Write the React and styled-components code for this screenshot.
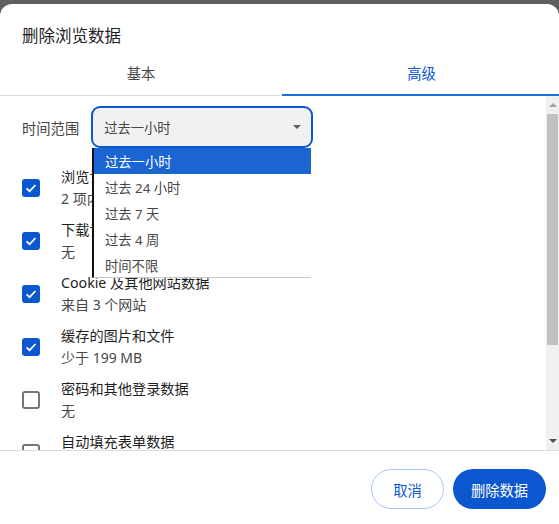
import React from 'react';
import styled, { createGlobalStyle } from 'styled-components';

const GlobalStyle = createGlobalStyle`
  html, body {
    margin: 0;
    padding: 0;
    background: #5f5f5f;
    font-family: 'Noto Sans', 'Noto Sans CJK SC', sans-serif;
  }
`;

const Dialog = styled.div`
  width: 559px;
  height: 520px;
  margin-top: 4px;
  background: #fff;
  border-radius: 12px 12px 0 0;
  display: flex;
  flex-direction: column;
  overflow: hidden;
`;

const Title = styled.h1`
  margin: 0;
  padding: 21px 22px 0;
  height: 30px;
  font-size: 16.5px;
  line-height: 22px;
  font-weight: 400;
  color: #1f1f1f;
`;

const Tabs = styled.div`
  display: grid;
  grid-template-columns: 282px 277px;
  height: 40px;
  border-bottom: 1px solid #dcdcdc;
`;

const Tab = styled.div`
  display: flex;
  align-items: center;
  justify-content: center;
  font-size: 14.3px;
  padding: 0 0 6px ${(props) => (props.$active ? '2px' : '0')};
  margin-bottom: -1px;
  color: ${(props) => (props.$active ? '#0b57d0' : '#474747')};
  box-shadow: ${(props) => (props.$active ? 'inset 0 -2px 0 #1a6fe0' : 'none')};
`;

const Body = styled.div`
  flex: 1;
  min-height: 0;
  display: flex;
  position: relative;
  overflow: hidden;
`;

const Content = styled.div`
  flex: 1;
  padding: 10px 0 0 22px;
`;

const RangeRow = styled.div`
  display: flex;
  align-items: center;
  gap: 12px;
  height: 42px;
  margin-bottom: 13px;
`;

const RangeLabel = styled.span`
  font-size: 14.3px;
  color: #474747;
`;

const Select = styled.div`
  box-sizing: border-box;
  width: 222px;
  height: 42px;
  border: 2px solid #0b57d0;
  border-radius: 9px;
  background: #f1f1f1;
  display: flex;
  align-items: center;
  justify-content: space-between;
  padding: 0 10px 0 11px;
  font-size: 13.3px;
  color: #474747;
`;

const Caret = styled.span`
  width: 0;
  height: 0;
  border-left: 4px solid transparent;
  border-right: 4px solid transparent;
  border-top: 4px solid #5f5f5f;
`;

const Menu = styled.ul`
  position: absolute;
  left: 92px;
  top: 52px;
  width: 217px;
  height: 129px;
  margin: 0;
  padding: 0;
  list-style: none;
  background: #fff;
  border-left: 2px solid #111;
  border-bottom: 1px solid #c8c8c8;
  overflow: hidden;
  z-index: 2;
`;

const MenuItem = styled.li`
  box-sizing: border-box;
  height: 26px;
  line-height: 26px;
  padding: 1px 0 0 11px;
  font-size: 13.3px;
  background: ${(props) => (props.$selected ? '#1a65d1' : 'transparent')};
  color: ${(props) => (props.$selected ? '#fff' : '#474747')};
`;

const Row = styled.div`
  display: flex;
  align-items: center;
  gap: 21px;
  height: 53px;
`;

const Box = styled.span`
  box-sizing: border-box;
  flex: none;
  width: 18px;
  height: 18px;
  border-radius: 3px;
  display: flex;
  align-items: center;
  justify-content: center;
  background: ${(props) => (props.$checked ? '#0b57d0' : '#fff')};
  border: ${(props) => (props.$checked ? 'none' : '2px solid #757575')};
`;

const RowText = styled.div`
  display: flex;
  flex-direction: column;
  gap: 3px;
`;

const RowLabel = styled.span`
  font-size: 14.2px;
  line-height: 19px;
  color: #1f1f1f;
`;

const RowSub = styled.span`
  font-size: 14px;
  line-height: 19px;
  color: #474747;
`;

const Scrollbar = styled.div`
  flex: none;
  width: 13px;
  background: #f0f0f0;
  display: flex;
  flex-direction: column;
  align-items: center;
`;

const ScrollArrow = styled.span`
  flex: none;
  height: 18px;
  display: flex;
  align-items: center;
  justify-content: center;
  width: 0;
  &::before {
    content: '';
    border-left: 4px solid transparent;
    border-right: 4px solid transparent;
    ${(props) => (props.$down ? 'border-top: 4px solid #505050;' : 'border-bottom: 4px solid #a3a3a3;')}
  }
`;

const ScrollThumb = styled.div`
  flex: none;
  width: 11px;
  height: 231px;
  background: #c1c1c1;
`;

const ScrollTrack = styled.div`
  flex: 1;
`;

const Footer = styled.div`
  box-sizing: border-box;
  height: 74px;
  border-top: 1px solid #dcdcdc;
  display: flex;
  justify-content: flex-end;
  align-items: flex-start;
  gap: 9px;
  padding: 18px 13px 0 0;
`;

const Button = styled.button`
  box-sizing: border-box;
  width: ${(props) => props.$width}px;
  height: 40px;
  border-radius: 20px;
  font-family: inherit;
  font-size: 14.3px;
  border: ${(props) => (props.$primary ? 'none' : '1px solid #a8c7fa')};
  background: ${(props) => (props.$primary ? '#0b57d0' : '#fff')};
  color: ${(props) => (props.$primary ? '#fff' : '#0b57d0')};
`;

const rows = [
  { label: '浏览记录', sub: '2 项内容', checked: true },
  { label: '下载记录', sub: '无', checked: true },
  { label: 'Cookie 及其他网站数据', sub: '来自 3 个网站', checked: true },
  { label: '缓存的图片和文件', sub: '少于 199 MB', checked: true },
  { label: '密码和其他登录数据', sub: '无', checked: false },
  { label: '自动填充表单数据', sub: '无', checked: false },
];

const options = ['过去一小时', '过去 24 小时', '过去 7 天', '过去 4 周', '时间不限'];

const Check = () => (
  <svg width="12" height="12" viewBox="0 0 12 12" fill="none">
    <path d="M1.5 6.3 4.6 9.2 10.5 3" stroke="#fff" strokeWidth="1.7" />
  </svg>
);

const App = () => (
  <>
    <GlobalStyle />
    <Dialog>
      <Title>删除浏览数据</Title>
      <Tabs>
        <Tab>基本</Tab>
        <Tab $active>高级</Tab>
      </Tabs>
      <Body>
        <Content>
          <RangeRow>
            <RangeLabel>时间范围</RangeLabel>
            <Select>
              过去一小时
              <Caret />
            </Select>
          </RangeRow>
          {rows.map((row) => (
            <Row key={row.label}>
              <Box $checked={row.checked}>{row.checked && <Check />}</Box>
              <RowText>
                <RowLabel>{row.label}</RowLabel>
                <RowSub>{row.sub}</RowSub>
              </RowText>
            </Row>
          ))}
        </Content>
        <Menu>
          {options.map((option, i) => (
            <MenuItem key={option} $selected={i === 0}>{option}</MenuItem>
          ))}
        </Menu>
        <Scrollbar>
          <ScrollArrow />
          <ScrollThumb />
          <ScrollTrack />
          <ScrollArrow $down />
        </Scrollbar>
      </Body>
      <Footer>
        <Button $width={73}>取消</Button>
        <Button $width={93} $primary>删除数据</Button>
      </Footer>
    </Dialog>
  </>
);

export default App;
